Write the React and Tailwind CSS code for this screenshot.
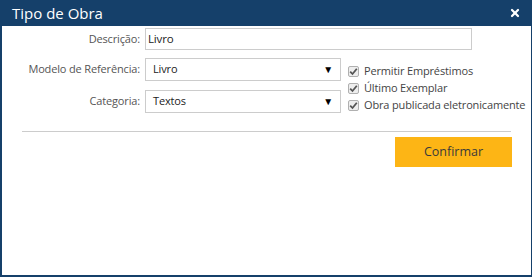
import { X } from 'lucide-react'

function Check({ label }) {
  return (
    <div className="flex items-center gap-[5px] h-[17px] whitespace-nowrap">
      <span className="w-[11px] h-[11px] border border-[#b0b0b0] bg-[#eeeeee] rounded-[2px] flex items-center justify-center">
        <svg width="9" height="9" viewBox="0 0 9 9">
          <path d="M1.2 4.6 L3.5 7 L7.8 1.8" fill="none" stroke="#555555" strokeWidth="1.8" />
        </svg>
      </span>
      <span className="text-[#444]">{label}</span>
    </div>
  )
}

function Select({ value }) {
  return (
    <div className="w-[196px] h-[23px] border border-[#cccccc] bg-white flex items-center pl-[7px] pr-[7px] text-[#222]">
      <span className="flex-1">{value}</span>
      <span className="text-[10px] text-black">▼</span>
    </div>
  )
}

export default function App() {
  return (
    <div
      className="w-[532px] h-[277px] bg-[#15406a] pl-[2px] pr-[1px] pb-[2px] flex flex-col text-[11px] tracking-[-0.15px]"
      style={{ fontFamily: '"Open Sans", "Segoe UI", sans-serif' }}
    >
      <div className="h-[26px] flex items-center justify-between pl-[10px] pr-[10px]">
        <span className="text-white text-[15px] tracking-normal">Tipo de Obra</span>
        <X size={12} strokeWidth={4.5} className="text-white" />
      </div>
      <div className="flex-1 bg-white flex flex-col pt-[2px]">
        <div className="flex items-center h-[22px]">
          <span className="w-[140px] pr-[2px] text-right text-[#555] whitespace-nowrap">Descrição:</span>
          <div className="ml-[3px] w-[327px] h-[22px] border border-[#cccccc] flex items-center pl-[2px] text-[#222] text-[11.5px]">Livro</div>
        </div>
        <div className="flex mt-[8px]">
          <div className="flex flex-col gap-[9px]">
            <div className="flex items-center">
              <span className="w-[140px] pr-[2px] text-right text-[#555] whitespace-nowrap">Modelo de Referência:</span>
              <div className="ml-[3px]"><Select value="Livro" /></div>
            </div>
            <div className="flex items-center">
              <span className="w-[140px] pr-[2px] text-right text-[#555] whitespace-nowrap">Categoria:</span>
              <div className="ml-[3px]"><Select value="Textos" /></div>
            </div>
          </div>
          <div className="ml-[7px] pt-[5px] flex flex-col">
            <Check label="Permitir Empréstimos" />
            <Check label="Último Exemplar" />
            <Check label="Obra publicada eletronicamente" />
          </div>
        </div>
        <div className="mx-[20px] mt-[17px] border-t border-[#cccccc]" />
        <div className="flex justify-end pr-[19px] mt-[5px]">
          <button className="w-[117px] h-[30px] bg-[#fdb515] text-[#3a3a3a] text-[12.5px] tracking-normal">Confirmar</button>
        </div>
      </div>
    </div>
  )
}
